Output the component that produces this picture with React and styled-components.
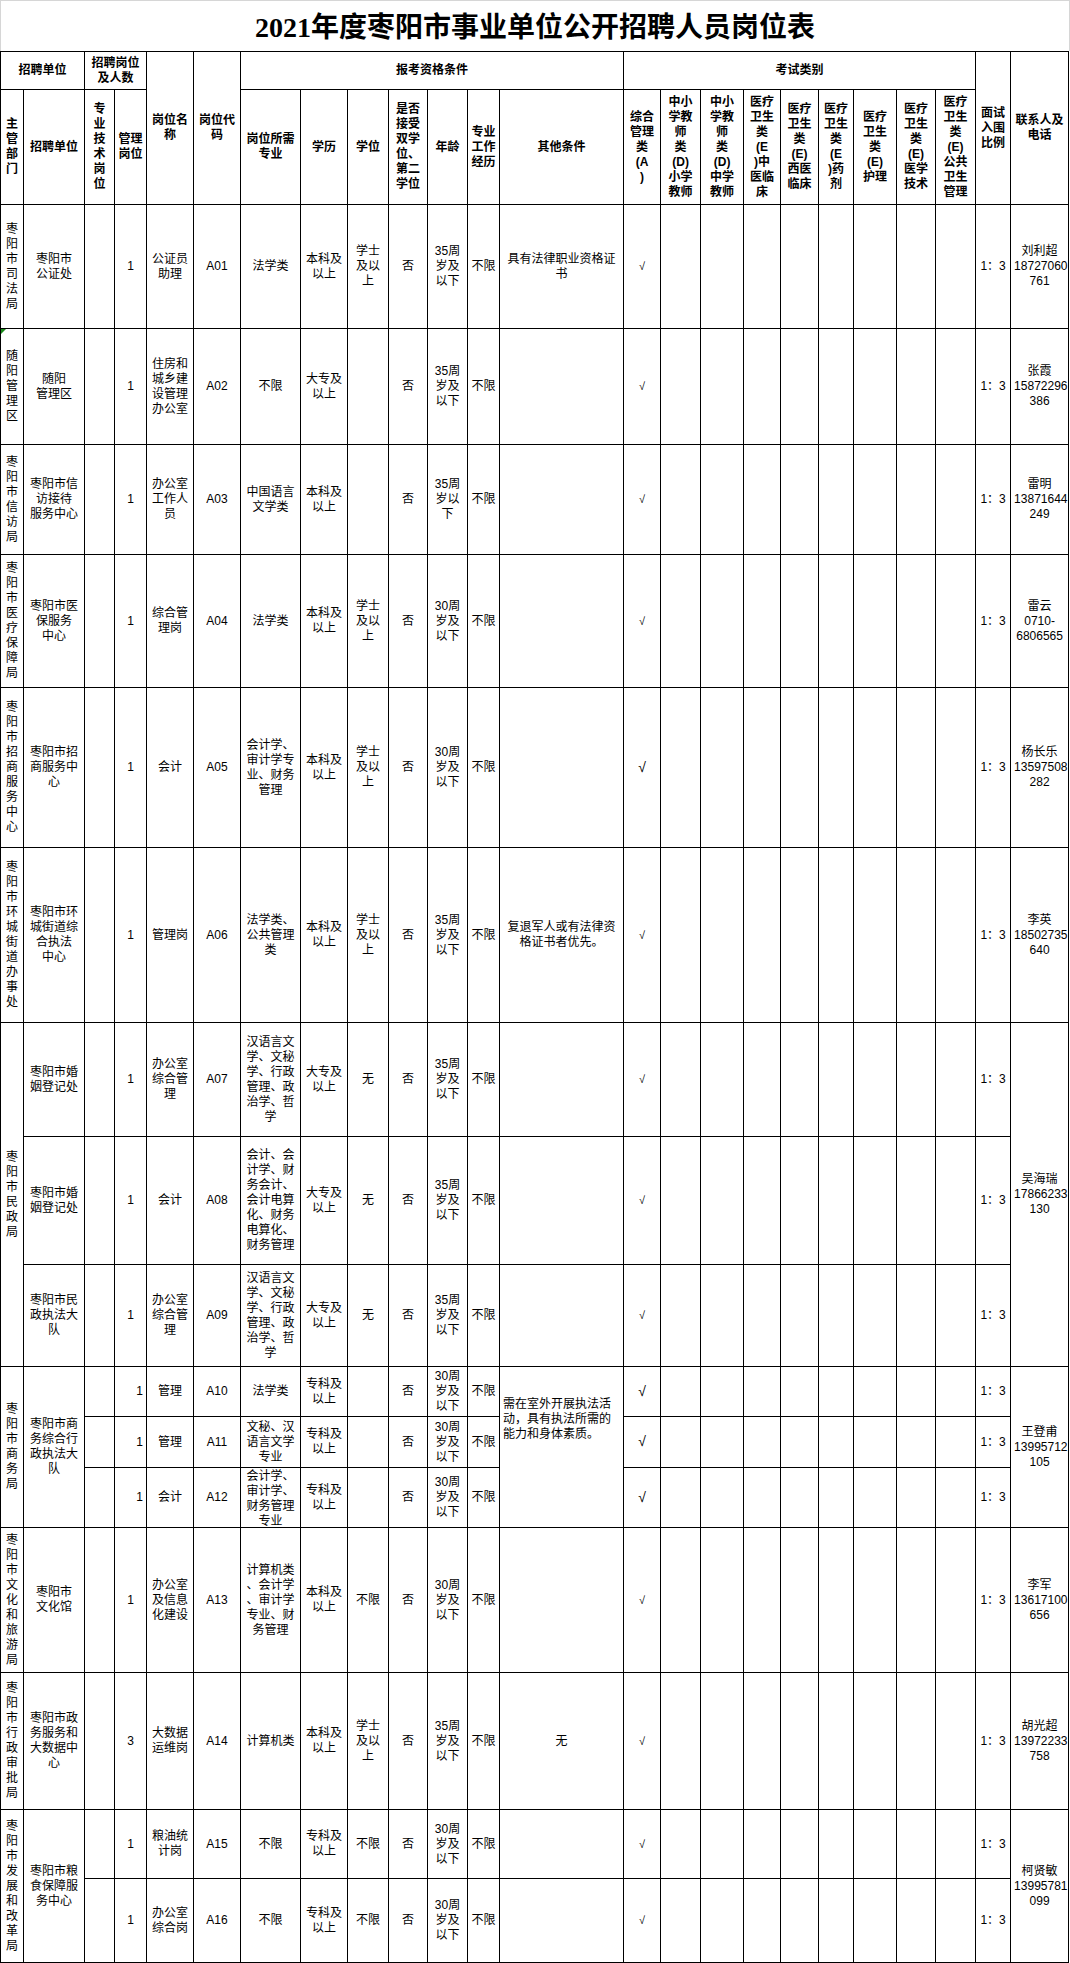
import React from "react";
import styled, { createGlobalStyle, css } from "styled-components";

const GlobalStyle = createGlobalStyle`
  html, body {
    margin: 0;
    padding: 0;
    background: #fff;
  }
  body {
    font-family: "Liberation Sans", "Noto Sans CJK SC", sans-serif;
    color: #000;
  }
`;

const Page = styled.div`
  width: 1070px;
`;

const Title = styled.h1`
  margin: 0;
  height: 51px;
  box-sizing: border-box;
  border: 1px solid #d6d6d6;
  border-bottom: none;
  display: flex;
  align-items: center;
  justify-content: center;
  padding-top: 3px;
  font-family: "Liberation Serif", "Noto Sans CJK SC", serif;
  font-size: 28px;
  line-height: 28px;
  font-weight: 700;
`;

const Sheet = styled.table`
  width: 1068px;
  border-collapse: collapse;
  table-layout: fixed;
  font-size: 12px;
  line-height: 15px;
`;

const Col = styled.col`
  width: ${(p) => p.$w}px;
`;

const Row = styled.tr`
  height: ${(p) => p.$h}px;
`;

const cellBase = css`
  border: 1px solid #000;
  padding: ${(p) => p.$top || 0}px 3px 0;
  text-align: ${(p) => p.$align || "center"};
  vertical-align: ${(p) => p.$valign || "middle"};
  white-space: pre;
  overflow: hidden;
`;

const Cell = styled.td`
  ${cellBase}
  font-weight: 400;
  ${(p) =>
    p.$flag &&
    css`
      position: relative;
      &::before {
        content: "";
        position: absolute;
        left: 0;
        top: 0;
        border-top: 5px solid #1a8a1a;
        border-right: 5px solid transparent;
      }
    `}
`;

const Head = styled.th`
  ${cellBase}
  font-weight: 700;
`;

const Clip = styled.div`
  max-height: 58px;
  overflow: hidden;
`;

const Check = styled.span`
  font-size: ${(p) => (p.$big ? 14 : 11)}px;
`;

const widths = [23, 61, 30, 32, 47, 47, 60, 47, 41, 39, 40, 32, 124, 37, 40, 43, 37, 38, 35, 43, 39, 40, 35, 58];

const vert = (s) => s.split("").join("\n");

const examHeads = [
  "综合\n管理\n类\n(A\n)",
  "中小\n学教\n师\n类\n(D)\n小学\n教师",
  "中小\n学教\n师\n类\n(D)\n中学\n教师",
  "医疗\n卫生\n类\n(E\n)中\n医临\n床",
  "医疗\n卫生\n类\n(E)\n西医\n临床",
  "医疗\n卫生\n类\n(E\n)药\n剂",
  "医疗\n卫生\n类\n(E)\n护理",
  "医疗\n卫生\n类\n(E)\n医学\n技术",
  "医疗\n卫生\n类\n(E)\n公共\n卫生\n管理",
];

const age35 = "35周\n岁及\n以下";
const age30 = "30周\n岁及\n以下";
const degBach = "学士\n及以\n上";
const bk = "本科及\n以上";
const dz = "大专及\n以上";
const zk = "专科及\n以上";
const hanyu = "汉语言文\n学、文秘\n学、行政\n管理、政\n治学、哲\n学";

const jobs = [
  { h: 124, dept: "枣阳市司法局", unit: "枣阳市\n公证处", n: "1", name: "公证员\n助理", code: "A01", major: "法学类", edu: bk, deg: degBach, age: age35, other: "具有法律职业资格证\n书", contact: "刘利超\n18727060\n761" },
  { h: 116, dept: "随阳管理区", flag: true, unit: "随阳\n管理区", n: "1", name: "住房和\n城乡建\n设管理\n办公室", code: "A02", major: "不限", edu: dz, deg: "", age: age35, other: "", contact: "张霞\n15872296\n386" },
  { h: 110, dept: "枣阳市信访局", unit: "枣阳市信\n访接待\n服务中心", n: "1", name: "办公室\n工作人\n员", code: "A03", major: "中国语言\n文学类", edu: bk, deg: "", age: "35周\n岁以\n下", other: "", contact: "雷明\n13871644\n249" },
  { h: 133, dept: "枣阳市医疗保障局", unit: "枣阳市医\n保服务\n中心", n: "1", name: "综合管\n理岗", code: "A04", major: "法学类", edu: bk, deg: degBach, age: age30, other: "", contact: "雷云\n0710-\n6806565" },
  { h: 160, dept: "枣阳市招商服务中心", unit: "枣阳市招\n商服务中\n心", n: "1", name: "会计", code: "A05", major: "会计学、\n审计学专\n业、财务\n管理", edu: bk, deg: degBach, age: age30, other: "", big: true, contact: "杨长乐\n13597508\n282" },
  { h: 175, dept: "枣阳市环城街道办事处", unit: "枣阳市环\n城街道综\n合执法\n中心", n: "1", name: "管理岗", code: "A06", major: "法学类、\n公共管理\n类", edu: bk, deg: degBach, age: age35, other: "复退军人或有法律资\n格证书者优先。", contact: "李英\n18502735\n640" },
  { h: 114, dept: { t: "枣阳市民政局", rs: 3 }, unit: "枣阳市婚\n姻登记处", n: "1", name: "办公室\n综合管\n理", code: "A07", major: hanyu, edu: dz, deg: "无", age: age35, other: "", contact: { t: "吴海瑞\n17866233\n130", rs: 3 } },
  { h: 128, dept: null, unit: "枣阳市婚\n姻登记处", n: "1", name: "会计", code: "A08", major: "会计、会\n计学、财\n务会计、\n会计电算\n化、财务\n电算化、\n财务管理", edu: dz, deg: "无", age: age35, other: "", contact: null },
  { h: 102, dept: null, unit: "枣阳市民\n政执法大\n队", n: "1", name: "办公室\n综合管\n理", code: "A09", major: hanyu, edu: dz, deg: "无", age: age35, other: "", contact: null },
  { h: 50, dept: { t: "枣阳市商务局", rs: 3 }, unit: { t: "枣阳市商\n务综合行\n政执法大\n队", rs: 3 }, n: "1", nRight: true, name: "管理", code: "A10", major: "法学类", edu: zk, deg: "", age: age30, other: { t: "需在室外开展执法活\n动，具有执法所需的\n能力和身体素质。", rs: 3, left: true }, big: true, contact: { t: "王登甫\n13995712\n105", rs: 3 } },
  { h: 51, dept: null, unit: null, n: "1", nRight: true, name: "管理", code: "A11", major: "文秘、汉\n语言文学\n专业", edu: zk, deg: "", age: age30, other: null, big: true, contact: null },
  { h: 60, dept: null, unit: null, n: "1", nRight: true, name: "会计", code: "A12", major: "会计学、\n审计学、\n财务管理\n专业", clip: true, edu: zk, deg: "", age: age30, other: null, big: true, contact: null },
  { h: 145, dept: "枣阳市文化和旅游局", unit: "枣阳市\n文化馆", n: "1", name: "办公室\n及信息\n化建设", code: "A13", major: "计算机类\n、会计学\n、审计学\n专业、财\n务管理", edu: bk, deg: "不限", age: age30, other: "", contact: "李军\n13617100\n656" },
  { h: 137, dept: "枣阳市行政审批局", unit: "枣阳市政\n务服务和\n大数据中\n心", n: "3", name: "大数据\n运维岗", code: "A14", major: "计算机类", edu: bk, deg: degBach, age: age35, other: "无", contact: "胡光超\n13972233\n758" },
  { h: 69, dept: { t: "枣阳市发展和改革局", rs: 2 }, unit: { t: "枣阳市粮\n食保障服\n务中心", rs: 2 }, n: "1", name: "粮油统\n计岗", code: "A15", major: "不限", edu: zk, deg: "不限", age: age30, other: "", contact: { t: "柯贤敏\n13995781\n099", rs: 2 } },
  { h: 84, dept: null, unit: null, n: "1", name: "办公室\n综合岗", code: "A16", major: "不限", edu: zk, deg: "不限", age: age30, other: "", contact: null },
];

const span = (v) => (typeof v === "string" ? { t: v, rs: 1 } : v);

function JobRow({ job }) {
  const dept = span(job.dept);
  const unit = span(job.unit);
  const other = span(job.other);
  const contact = span(job.contact);
  return (
    <Row $h={job.h}>
      {dept && (
        <Cell rowSpan={dept.rs} $flag={job.flag}>
          {vert(dept.t)}
        </Cell>
      )}
      {unit && <Cell rowSpan={unit.rs}>{unit.t}</Cell>}
      <Cell />
      <Cell $align={job.nRight ? "right" : "center"}>{job.n}</Cell>
      <Cell>{job.name}</Cell>
      <Cell>{job.code}</Cell>
      {job.clip ? (
        <Cell $valign="top" $top={1}>
          <Clip>{job.major}</Clip>
        </Cell>
      ) : (
        <Cell>{job.major}</Cell>
      )}
      <Cell>{job.edu}</Cell>
      <Cell>{job.deg}</Cell>
      <Cell>否</Cell>
      <Cell>{job.age}</Cell>
      <Cell>不限</Cell>
      {other &&
        (other.left ? (
          <Cell rowSpan={other.rs} $align="left" $valign="top" $top={30}>
            {other.t}
          </Cell>
        ) : (
          <Cell rowSpan={other.rs}>{other.t}</Cell>
        ))}
      <Cell>
        <Check $big={job.big}>√</Check>
      </Cell>
      {Array.from({ length: 8 }, (_, i) => (
        <Cell key={i} />
      ))}
      <Cell>1：3</Cell>
      {contact && <Cell rowSpan={contact.rs}>{contact.t}</Cell>}
    </Row>
  );
}

export default function App() {
  return (
    <Page>
      <GlobalStyle />
      <Title>2021年度枣阳市事业单位公开招聘人员岗位表</Title>
      <Sheet>
        <colgroup>
          {widths.map((w, i) => (
            <Col key={i} $w={w} />
          ))}
        </colgroup>
        <thead>
          <Row $h={38}>
            <Head colSpan={2}>招聘单位</Head>
            <Head colSpan={2}>{"招聘岗位\n及人数"}</Head>
            <Head rowSpan={2}>{"岗位名\n称"}</Head>
            <Head rowSpan={2}>{"岗位代\n码"}</Head>
            <Head colSpan={7}>报考资格条件</Head>
            <Head colSpan={9}>考试类别</Head>
            <Head rowSpan={2}>{"面试\n入围\n比例"}</Head>
            <Head rowSpan={2}>{"联系人及\n电话"}</Head>
          </Row>
          <Row $h={115}>
            <Head>{vert("主管部门")}</Head>
            <Head>招聘单位</Head>
            <Head>{vert("专业技术岗位")}</Head>
            <Head>{"管理\n岗位"}</Head>
            <Head>{"岗位所需\n专业"}</Head>
            <Head>学历</Head>
            <Head>学位</Head>
            <Head>{"是否\n接受\n双学\n位、\n第二\n学位"}</Head>
            <Head>年龄</Head>
            <Head>{"专业\n工作\n经历"}</Head>
            <Head>其他条件</Head>
            {examHeads.map((t) => (
              <Head key={t}>{t}</Head>
            ))}
          </Row>
        </thead>
        <tbody>
          {jobs.map((job) => (
            <JobRow key={job.code} job={job} />
          ))}
        </tbody>
      </Sheet>
    </Page>
  );
}
